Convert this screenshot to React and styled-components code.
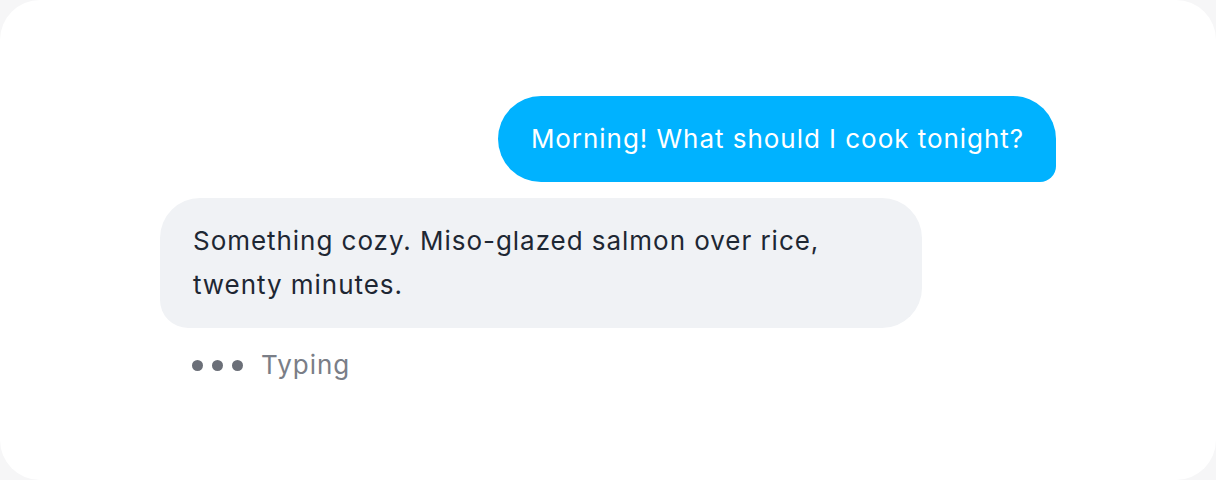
import React from "react";
import styled, { createGlobalStyle } from "styled-components";

const Global = createGlobalStyle`
  html, body { margin: 0; padding: 0; background: #f6f6f7; }
  body { font-family: Inter, "Noto Sans", sans-serif; -webkit-font-smoothing: antialiased; }
`;

const Card = styled.div`
  width: 1216px;
  height: 480px;
  box-sizing: border-box;
  background: #ffffff;
  border-radius: 40px;
  display: flex;
  justify-content: center;
  padding-top: 96px;
`;

const Thread = styled.div`
  width: 896px;
  display: flex;
  flex-direction: column;
`;

const Row = styled.div`
  display: flex;
  justify-content: ${(p) => (p.$mine ? "flex-end" : "flex-start")};
  margin-bottom: ${(p) => p.$gap}px;
`;

const Bubble = styled.div`
  box-sizing: border-box;
  max-width: 762px;
  padding: 21px 32px 21px 33px;
  font-size: 26px;
  letter-spacing: 0.96px;
  line-height: 44px;
  background: ${(p) => (p.$mine ? "#00b2ff" : "#f0f2f5")};
  color: ${(p) => (p.$mine ? "#ffffff" : "#1e2733")};
  border-radius: ${(p) => (p.$mine ? "43px 43px 16px 43px" : "40px 40px 40px 28px")};
`;

const Typing = styled.div`
  display: flex;
  align-items: center;
  gap: 18px;
  padding-left: 32px;
  height: 30px;
  margin-top: 6px;
`;

const Dots = styled.div`
  display: flex;
  gap: 9px;
`;

const Dot = styled.span`
  width: 11px;
  height: 11px;
  border-radius: 50%;
  background: #6b6f78;
`;

const TypingLabel = styled.span`
  font-size: 26px;
  letter-spacing: 1px;
  color: #7a7e87;
  line-height: 30px;
`;

export default function App() {
  return (
    <>
      <Global />
      <Card>
        <Thread>
          <Row $mine $gap={16}>
            <Bubble $mine>Morning! What should I cook tonight?</Bubble>
          </Row>
          <Row $gap={16}>
            <Bubble>Something cozy. Miso-glazed salmon over rice, twenty minutes.</Bubble>
          </Row>
          <Typing>
            <Dots>
              <Dot />
              <Dot />
              <Dot />
            </Dots>
            <TypingLabel>Typing</TypingLabel>
          </Typing>
        </Thread>
      </Card>
    </>
  );
}
